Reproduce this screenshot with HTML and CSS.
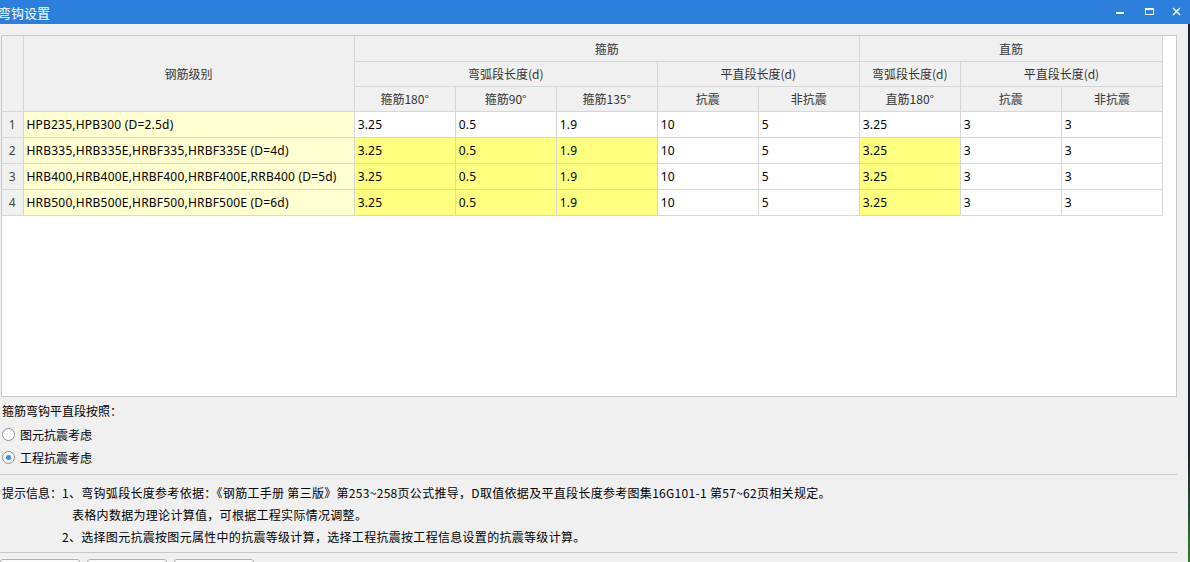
FILE: index.html
```html
<!DOCTYPE html>
<html lang="zh">
<head>
<meta charset="utf-8">
<title>弯钩设置</title>
<link rel="stylesheet" href="styles.css">
</head>
<body>
<div class="win">
  <div class="titlebar">
    <span class="title">弯钩设置</span>
    <div class="controls">
      <svg class="ctl" width="30" height="24" viewBox="0 0 30 24"><rect x="10" y="12" width="8" height="2" fill="#fff"/></svg>
      <svg class="ctl" width="28" height="24" viewBox="0 0 28 24"><rect x="9.5" y="8.5" width="8" height="6" fill="none" stroke="#fff" stroke-width="1"/><rect x="9" y="8" width="9" height="2" fill="#fff"/></svg>
      <svg class="ctl" width="26" height="24" viewBox="0 0 26 24"><path d="M9 8 L16 15 M16 8 L9 15" stroke="#fff" stroke-width="1.4"/></svg>
    </div>
  </div>
  <div class="body">
    <div class="main">
      <div class="grid-box">
        <table class="grid">
          <colgroup>
            <col class="c-rn"><col class="c-name">
            <col class="c-v"><col class="c-v"><col class="c-v"><col class="c-v"><col class="c-v"><col class="c-v"><col class="c-v"><col class="c-v">
          </colgroup>
          <thead>
            <tr>
              <th rowspan="3" class="rn"></th>
              <th rowspan="3">钢筋级别</th>
              <th colspan="5">箍筋</th>
              <th colspan="3">直筋</th>
            </tr>
            <tr>
              <th colspan="3">弯弧段长度(d)</th>
              <th colspan="2">平直段长度(d)</th>
              <th>弯弧段长度(d)</th>
              <th colspan="2">平直段长度(d)</th>
            </tr>
            <tr>
              <th>箍筋180°</th><th>箍筋90°</th><th>箍筋135°</th><th>抗震</th><th>非抗震</th><th>直筋180°</th><th>抗震</th><th>非抗震</th>
            </tr>
          </thead>
          <tbody>
            <tr>
              <td class="rn">1</td><td class="name">HPB235,HPB300 (D=2.5d)</td>
              <td>3.25</td><td>0.5</td><td>1.9</td><td>10</td><td>5</td><td>3.25</td><td>3</td><td>3</td>
            </tr>
            <tr>
              <td class="rn">2</td><td class="name">HRB335,HRB335E,HRBF335,HRBF335E (D=4d)</td>
              <td class="hl">3.25</td><td class="hl">0.5</td><td class="hl">1.9</td><td>10</td><td>5</td><td class="hl">3.25</td><td>3</td><td>3</td>
            </tr>
            <tr>
              <td class="rn">3</td><td class="name">HRB400,HRB400E,HRBF400,HRBF400E,RRB400 (D=5d)</td>
              <td class="hl">3.25</td><td class="hl">0.5</td><td class="hl">1.9</td><td>10</td><td>5</td><td class="hl">3.25</td><td>3</td><td>3</td>
            </tr>
            <tr>
              <td class="rn">4</td><td class="name">HRB500,HRB500E,HRBF500,HRBF500E (D=6d)</td>
              <td class="hl">3.25</td><td class="hl">0.5</td><td class="hl">1.9</td><td>10</td><td>5</td><td class="hl">3.25</td><td>3</td><td>3</td>
            </tr>
          </tbody>
        </table>
      </div>
      <div class="opts">
        <div class="opt-label">箍筋弯钩平直段按照：</div>
        <label class="radio"><span class="dot"></span>图元抗震考虑</label>
        <label class="radio on"><span class="dot"></span>工程抗震考虑</label>
      </div>
      <div class="info">
        <div class="info-row"><span class="info-h">提示信息：</span><span>1、弯钩弧段长度参考依据：《钢筋工手册 第三版》第253~258页公式推导，D取值依据及平直段长度参考图集16G101-1 第57~62页相关规定。</span></div>
        <div class="info-row sub">表格内数据为理论计算值，可根据工程实际情况调整。</div>
        <div class="info-row"><span class="info-h"></span><span>2、选择图元抗震按图元属性中的抗震等级计算，选择工程抗震按工程信息设置的抗震等级计算。</span></div>
      </div>
      <div class="btns">
        <button class="btn"></button><button class="btn"></button><button class="btn"></button>
      </div>
    </div>
    <div class="edge"></div>
  </div>
</div>
</body>
</html>
```

FILE: styles.css
```css
* { box-sizing: border-box; }
html, body { margin: 0; padding: 0; }
body {
  width: 1190px; height: 562px; overflow: hidden;
  background: #f0f0f0;
  font-family: "Noto Sans", "Noto Sans CJK SC", sans-serif;
  font-size: 12px; color: #000;
}
.win { width: 1190px; height: 562px; display: flex; flex-direction: column; }
.titlebar {
  height: 24px; flex: none; background: #2d7fde; color: #fff;
  display: flex; align-items: center; justify-content: space-between;
}
.title { font-family: "Noto Sans CJK SC", sans-serif; font-size: 13px; margin-left: -2px; }
.controls { display: flex; }
.ctl { display: block; }
.body { flex: 1; display: flex; min-height: 0; overflow: hidden; }
.main { flex: 1; display: flex; flex-direction: column; padding: 11px 11px 0 0; min-width: 0; }
.main > * { flex: none; }
.edge { width: 2px; background: linear-gradient(#1c2433 0%, #1c2433 80%, #2f7a2c 100%); }
.grid-box {
  margin-left: 1px; height: 362px; background: #fff;
  border: 1px solid #c8c8c8;
}
.grid {
  border-collapse: collapse; table-layout: fixed; width: 1161px;
  font-family: "Noto Sans", "Noto Sans CJK SC", sans-serif;
  font-size: 12px;
}
.c-rn { width: 21px; }
.c-name { width: 331px; }
.c-v { width: 101px; }
.grid th, .grid td { border: 1px solid #d6d6d6; padding: 0; }
.grid tr > :first-child { border-left: 0; }
.grid thead tr:first-child > * { border-top: 0; }
.grid th {
  background: #f0f0f0; color: #333; font-weight: normal;
  height: 25px; text-align: center;
  font-family: "Noto Sans CJK SC", sans-serif;
}
.grid td { height: 26px; padding-left: 3px; white-space: nowrap; overflow: hidden; letter-spacing: 0.2px; }
.grid td.rn { background: #f0f0f0; color: #444; text-align: center; padding-left: 0; letter-spacing: 0; }
.grid td.name { background: #ffffd0; }
.grid td.hl { background: #ffff80; }
.opts { padding: 6px 0 0 2px; font-family: "Noto Sans CJK SC", sans-serif; }
.opt-label { height: 20px; line-height: 16px; }
.radio { display: flex; align-items: center; height: 23px; }
.dot {
  width: 13px; height: 13px; border-radius: 50%; border: 1px solid #8a8a8a;
  background: #fff; margin-right: 5px; display: flex; align-items: center; justify-content: center;
}
.radio.on .dot::after { content: ""; width: 5px; height: 5px; border-radius: 50%; background: #3a8ee6; }
.info {
  margin-top: 5px; border-top: 1px solid #c8c8c8; border-bottom: 1px solid #c8c8c8;
  padding: 6px 0 5px 2px; font-family: "Noto Sans CJK SC", sans-serif; letter-spacing: 0.3px;
}
.info-row { height: 22px; display: flex; align-items: center; }
.info-h { width: 60px; flex: none; letter-spacing: 0; }
.info-row.sub { padding-left: 70px; }
.btns { display: flex; gap: 7px; padding-top: 6px; }
.btn {
  width: 80px; height: 24px; background: #fbfbfb; border: 1px solid #b0b0b0;
  border-radius: 3px; padding: 0; flex: none;
}
```
